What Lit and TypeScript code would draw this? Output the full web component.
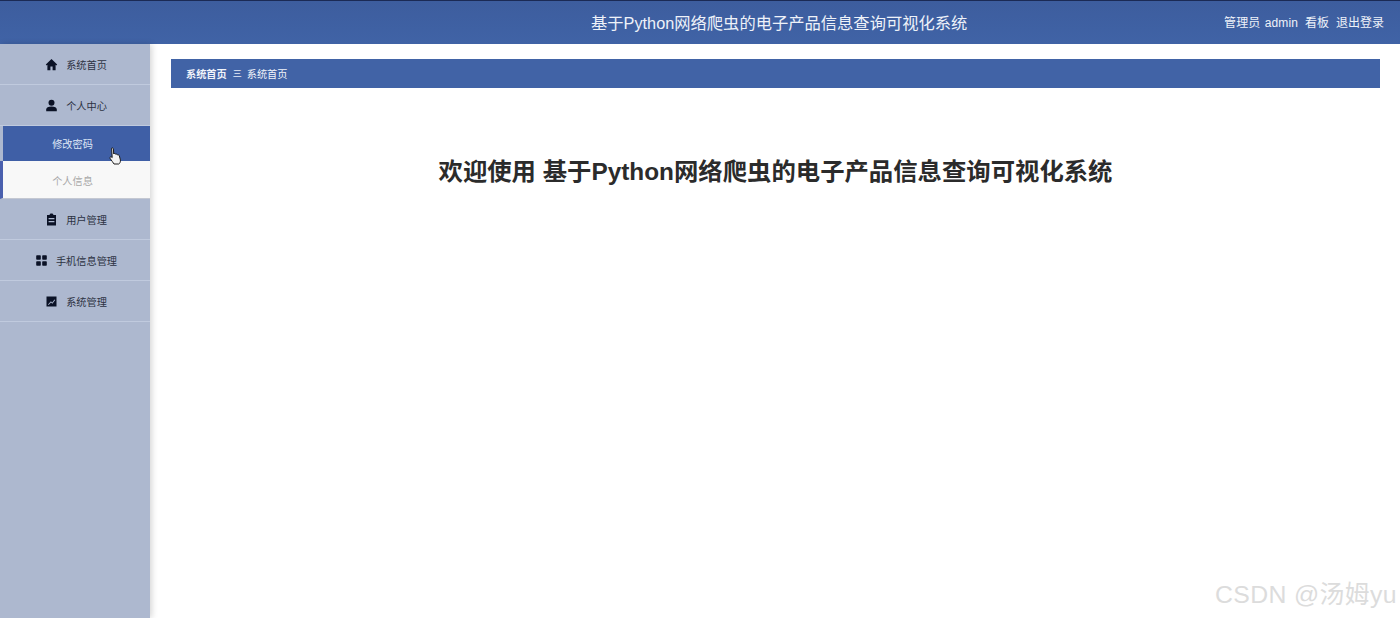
import { LitElement, html, css, svg } from "lit";
import { customElement } from "lit/decorators.js";

const icons = {
  home: svg`<path d="M6.5 1 .8 6.4 1.7 7.4 2.4 6.7V12.2H5.4V8.6H7.6V12.2H10.6V6.7L11.3 7.4 12.2 6.4Z"/>`,
  user: svg`<circle cx="6.5" cy="3.8" r="3"/><path d="M1.2 12.2V10.4C1.2 8.5 3.2 7.4 6.5 7.4S11.8 8.5 11.8 10.4V12.2Z"/>`,
  clip: svg`<path fill-rule="evenodd" d="M2 2H4.6C4.7 1 5.5 .6 6.5 .6S8.3 1 8.4 2H11V12.4H2ZM3.6 5V6.2H9.4V5ZM3.6 8V9.2H9.4V8Z"/>`,
  grid: svg`<rect x="1.2" y="1.2" width="4.6" height="4.6" rx=".8"/><rect x="7.2" y="1.2" width="4.6" height="4.6" rx=".8"/><rect x="1.2" y="7.2" width="4.6" height="4.6" rx=".8"/><rect x="7.2" y="7.2" width="4.6" height="4.6" rx=".8"/>`,
  chart: svg`<path fill-rule="evenodd" d="M1.5 1.5H11.5V11.5H1.5ZM3 9.4 3.6 10 6 7.6 7.4 8.8 10.2 5 9.5 4.4 7.2 7.4 5.9 6.2Z"/>`,
};

@customElement("app-root")
export class AppRoot extends LitElement {
  static styles = css`
    :host {
      display: block;
      position: relative;
      width: 1400px;
      height: 618px;
      overflow: hidden;
      background: #fff;
      font-family: "Liberation Sans", "Noto Sans CJK SC", sans-serif;
    }
    .page { display: flex; flex-direction: column; height: 100%; }
    .top {
      height: 44px;
      flex: none;
      box-sizing: border-box;
      border-top: 1px solid #1b2a55;
      background: linear-gradient(#3d5d9e, #4063a6);
      display: flex;
      align-items: center;
      color: #eef2f9;
      padding: 0 16px 0 591px;
    }
    .title { font-size: 16.3px; padding-bottom: 1px; }
    .links { margin-left: auto; display: flex; gap: 7px; font-size: 12px; padding-bottom: 2px; }
    .admin { word-spacing: 1px; letter-spacing: .1px; }
    .body { flex: 1; display: flex; min-height: 0; }
    .side {
      width: 150px;
      flex: none;
      background: #adb8cf;
      box-shadow: 2px 0 6px rgba(0, 0, 0, .16);
      color: #2c3242;
      font-size: 10.2px;
    }
    .item {
      height: 41px;
      box-sizing: border-box;
      border-bottom: 1px solid #c0cade;
      display: flex;
      align-items: center;
      justify-content: center;
      gap: 8px;
      padding-left: 2px;
    }
    .item svg { width: 13px; height: 13px; fill: #0b1226; flex: none; }
    .sub {
      display: flex;
      align-items: center;
      justify-content: center;
      box-sizing: border-box;
      padding-right: 8px;
      margin-left: 3px;
    }
    .sub.active { height: 35px; background: #3f5fa6; color: #dfe7f6; }
    .sub.plain {
      height: 38px;
      background: #f8f8f8;
      color: #a8a8a8;
      margin-left: 0;
      padding: 1px 8px 0 0;
      border-left: 3px solid #4a60ae;
      border-bottom: 1px solid #c4c8d2;
    }
    .main { flex: 1; padding: 15px 20px 0 21px; min-width: 0; }
    .crumb {
      height: 29px;
      box-sizing: border-box;
      background: #4163a6;
      color: #f1f4fa;
      font-size: 10.2px;
      display: flex;
      align-items: center;
      padding: 0 0 1px 15px;
      gap: 6px;
    }
    .crumb b { font-weight: 700; }
    .sep { width: 8px; font-size: 9px; color: #e6ecf7; text-align: center; }
    h1 {
      margin: 68px 0 0;
      text-align: center;
      font-size: 24.36px;
      line-height: 32px;
      font-weight: 700;
      color: #2b2b2b;
    }
    .cursor { position: absolute; left: 109px; top: 147px; width: 13px; height: 18px; }
    .mark {
      position: absolute;
      right: 3px;
      top: 580px;
      font-size: 24.8px;
      line-height: 30px;
      color: #dcdcdc;
      letter-spacing: .4px;
    }
  `;

  private item(icon: keyof typeof icons, label: string) {
    return html`<div class="item"><svg viewBox="0 0 13 13">${icons[icon]}</svg><span>${label}</span></div>`;
  }

  render() {
    return html`
      <div class="page">
        <header class="top">
          <div class="title">基于Python网络爬虫的电子产品信息查询可视化系统</div>
          <div class="links"><span class="admin">管理员 admin</span><span>看板</span><span>退出登录</span></div>
        </header>
        <div class="body">
          <nav class="side">
            ${this.item("home", "系统首页")}
            ${this.item("user", "个人中心")}
            <div class="sub active">修改密码</div>
            <div class="sub plain">个人信息</div>
            ${this.item("clip", "用户管理")}
            ${this.item("grid", "手机信息管理")}
            ${this.item("chart", "系统管理")}
          </nav>
          <main class="main">
            <div class="crumb"><b>系统首页</b><span class="sep">三</span><span>系统首页</span></div>
            <h1>欢迎使用 基于Python网络爬虫的电子产品信息查询可视化系统</h1>
          </main>
        </div>
      </div>
      <svg class="cursor" viewBox="0 0 13 18">
        <path d="M2.6 1.2C3.4.6 4.3 1 4.4 2L4.7 7 5 6.6C5.8 6.3 6.5 6.6 6.7 7.2 7.5 6.9 8.2 7.2 8.4 7.9 9.2 7.6 10.2 8 10.4 9L11.4 13C11.7 14.6 10.8 16.6 9.8 17H5C4.2 15.6 2.6 13.6 1.2 11.6.6 10.6 1.2 9.6 2.2 9.8L3.2 10.6Z" fill="#f4f4f4" stroke="#1c1c1c" stroke-width="1"/>
      </svg>
      <div class="mark">CSDN @汤姆yu</div>
    `;
  }
}
